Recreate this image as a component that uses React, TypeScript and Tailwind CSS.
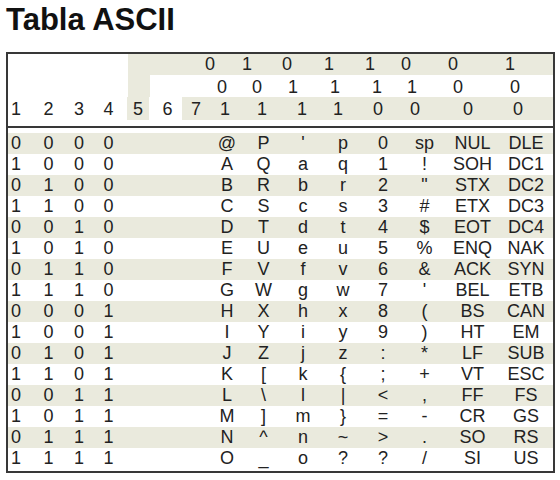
const shade = "bg-[#eaeadd]";

// widths of the 15 body columns (bits 1-4, 5-7 blank, then 8 char columns)
const bodyW = [
  "w-[25px] pr-[9px]",
  "w-[31px]",
  "w-[30px]",
  "w-[29px]",
  "w-[30px]",
  "w-[29px]",
  "w-[28px]",
  "w-[34px]",
  "w-[39px]",
  "w-[40px]",
  "w-[40px]",
  "w-[40px]",
  "w-[43px]",
  "w-[53px]",
  "w-[54px]",
];

const row1W = ["w-[36px]", "w-[38px]", "w-[42px]", "w-[42px]", "w-[40px]", "w-[32px]", "w-[62px]", "w-[52px]"];
const row2W = ["w-[36px]", "w-[34px]", "w-[38px]", "w-[46px]", "w-[38px]", "w-[32px]", "w-[60px]", "w-[54px]"];
const row3W = ["w-[30px]", "w-[44px]", "w-[36px]", "w-[36px]", "w-[44px]", "w-[30px]", "w-[76px]", "w-[24px]"];

const rows: string[][] = [
  ["0", "0", "0", "0", "@", "P", "'", "p", "0", "sp", "NUL", "DLE"],
  ["1", "0", "0", "0", "A", "Q", "a", "q", "1", "!", "SOH", "DC1"],
  ["0", "1", "0", "0", "B", "R", "b", "r", "2", "\"", "STX", "DC2"],
  ["1", "1", "0", "0", "C", "S", "c", "s", "3", "#", "ETX", "DC3"],
  ["0", "0", "1", "0", "D", "T", "d", "t", "4", "$", "EOT", "DC4"],
  ["1", "0", "1", "0", "E", "U", "e", "u", "5", "%", "ENQ", "NAK"],
  ["0", "1", "1", "0", "F", "V", "f", "v", "6", "&", "ACK", "SYN"],
  ["1", "1", "1", "0", "G", "W", "g", "w", "7", "'", "BEL", "ETB"],
  ["0", "0", "0", "1", "H", "X", "h", "x", "8", "(", "BS", "CAN"],
  ["1", "0", "0", "1", "I", "Y", "i", "y", "9", ")", "HT", "EM"],
  ["0", "1", "0", "1", "J", "Z", "j", "z", ":", "*", "LF", "SUB"],
  ["1", "1", "0", "1", "K", "[", "k", "{", ";", "+", "VT", "ESC"],
  ["0", "0", "1", "1", "L", "\\", "l", "|", "<", ",", "FF", "FS"],
  ["1", "0", "1", "1", "M", "]", "m", "}", "=", "-", "CR", "GS"],
  ["0", "1", "1", "1", "N", "^", "n", "~", ">", ".", "SO", "RS"],
  ["1", "1", "1", "1", "O", "_", "o", "?", "?", "/", "SI", "US"],
];

const App: React.FC = () => {
  return (
    <div className="min-h-screen bg-white pt-[4px] text-[#222] font-['Liberation_Sans',Arial,sans-serif]">
      <h1 className="pl-[6px] text-[31px] leading-[31px] font-bold text-[#111]">Tabla ASCII</h1>

      <div className="mt-[17px] ml-[6px] w-[549px] border-2 border-[#383838] pb-[2px] text-[18px]">
        {/* header row 1: bit 5 */}
        <div className="flex h-[21px] items-center">
          <div className="w-[120px] shrink-0" />
          <div className={`flex flex-1 h-full items-center ${shade}`}>
            <div className="w-[64px] shrink-0" />
            {["0", "1", "0", "1", "1", "0", "0", "1"].map((v, i) => (
              <div key={i} className={`${row1W[i]} shrink-0 text-center`}>{v}</div>
            ))}
          </div>
        </div>

        {/* header row 2: bit 6 */}
        <div className="flex h-[22px] items-center">
          <div className="w-[120px] shrink-0" />
          <div className={`w-[22px] h-full shrink-0 ${shade}`} />
          <div className="w-[54px] shrink-0" />
          {["0", "0", "1", "1", "1", "1", "0", "0"].map((v, i) => (
            <div key={i} className={`${row2W[i]} shrink-0 text-center pt-[2px]`}>{v}</div>
          ))}
        </div>

        {/* header row 3: bit numbers + bit 7 */}
        <div className="flex h-[23px] items-center">
          {["1", "2", "3", "4"].map((v, i) => (
            <div key={i} className={`${bodyW[i]} shrink-0 text-center pt-[2px]`}>{v}</div>
          ))}
          <div className="w-[30px] h-full shrink-0 flex justify-center">
            <div className={`w-[22px] h-full flex items-center justify-center pt-[2px] ${shade}`}>5</div>
          </div>
          <div className="w-[29px] shrink-0 text-center pt-[2px]">6</div>
          <div className={`w-[28px] h-full shrink-0 flex items-center justify-center pt-[2px] ${shade}`}>7</div>
          <div className={`flex flex-1 h-full items-center pt-[2px] ${shade}`}>
            {["1", "1", "1", "1", "0", "0", "0", "0"].map((v, i) => (
              <div key={i} className={`${row3W[i]} shrink-0 text-center`}>{v}</div>
            ))}
          </div>
        </div>

        <div className="mt-[6px] mb-[5px] h-[2px] bg-[#383838]" />

        {rows.map((r, ri) => {
          const cells = [r[0], r[1], r[2], r[3], "", "", "", ...r.slice(4)];
          return (
            <div key={ri} className={`flex h-[21px] items-center ${ri % 2 === 0 ? shade : ""}`}>
              {cells.map((c, ci) => (
                <div key={ci} className={`${bodyW[ci]} shrink-0 text-center whitespace-nowrap`}>{c}</div>
              ))}
            </div>
          );
        })}
      </div>
    </div>
  );
};

export default App;
